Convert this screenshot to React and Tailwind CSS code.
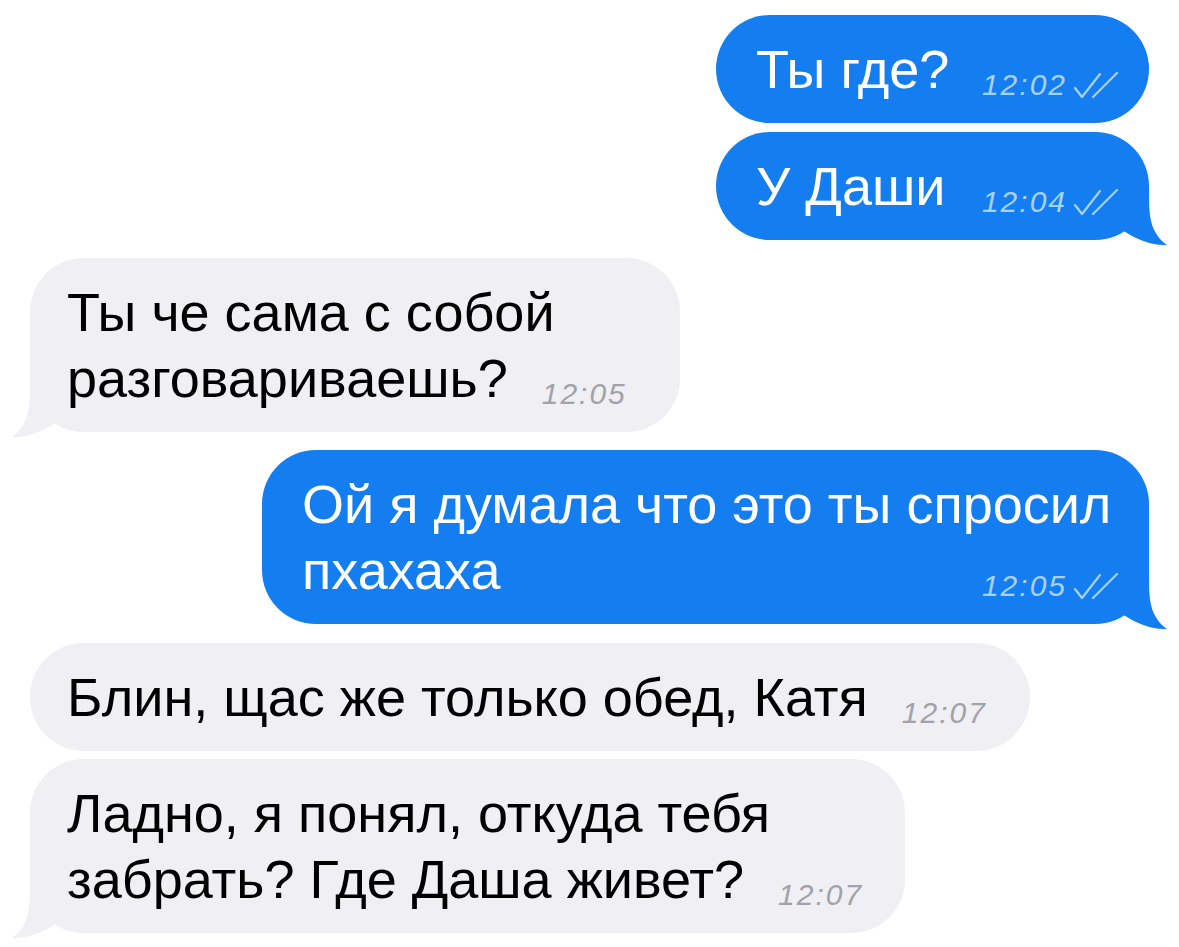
const font = "font-['Liberation_Sans',Arial,sans-serif]";

function Checks() {
  return (
    <svg width="46" height="28" viewBox="0 0 46 28" fill="none" className="inline-block ml-[6px]">
      <path d="M2 16 L9 25 L27 2" stroke="#a9d0fa" strokeWidth="2.2" strokeLinecap="round" strokeLinejoin="round" />
      <path d="M20 25 L44 1" stroke="#a9d0fa" strokeWidth="2.2" strokeLinecap="round" />
    </svg>
  );
}

function Time({ value, out }) {
  return (
    <span
      className={`inline-flex items-end shrink-0 italic text-[30px] tracking-[2px] leading-none translate-y-[7px] ${
        out ? 'text-[#a9d0fa]' : 'text-[#a2a2a8]'
      }`}
    >
      {value}
      {out && <Checks />}
    </span>
  );
}

function Tail({ side, color }) {
  // tail drawn at the bottom corner, sitting over the bubble edge
  return (
    <svg
      width="70"
      height="60"
      viewBox="0 0 70 60"
      className={`absolute bottom-[-6px] ${side === 'right' ? 'right-[-18px]' : 'left-[-18px] -scale-x-100'}`}
    >
      <path
        d="M0 0 L52 0 L52 10 C52 34 55 48 70 59 C56 60 40 54 25 44 L0 30 Z"
        fill={color}
      />
    </svg>
  );
}

function Bubble({ out, tail, width, lines, time, spread }) {
  const color = out ? '#147ef0' : '#efeff4';
  return (
    <div
      className={`relative rounded-[54px] py-[21px] text-[54px] leading-[66px] ${
        out ? 'self-end mr-[30px] bg-[#147ef0] text-white pl-[40px] pr-[30px]' : 'self-start ml-[30px] bg-[#efeff4] text-black pl-[37px] pr-[38px]'
      } ${width}`}
    >
      {tail && <Tail side={out ? 'right' : 'left'} color={color} />}
      <div className="relative">
        {lines.slice(0, -1).map((l) => (
          <div key={l} className="whitespace-nowrap">{l}</div>
        ))}
        <div className={`flex items-baseline whitespace-nowrap ${spread ? 'justify-between' : 'gap-[34px]'}`}>
          <span>{lines[lines.length - 1]}</span>
          <Time value={time} out={out} />
        </div>
      </div>
    </div>
  );
}

export default function App() {
  return (
    <div className={`w-[1179px] h-[947px] bg-white flex flex-col pt-[15px] overflow-hidden ${font}`}>
      <Bubble out width="w-[433px]" lines={['Ты где?']} time="12:02" spread />
      <div className="h-[9px] shrink-0" />
      <Bubble out tail width="w-[433px]" lines={['У Даши']} time="12:04" spread />
      <div className="h-[18px] shrink-0" />
      <Bubble tail width="w-[650px]" lines={['Ты че сама с собой', 'разговариваешь?']} time="12:05" />
      <div className="h-[18px] shrink-0" />
      <Bubble out tail width="w-[887px]" lines={['Ой я думала что это ты спросил', 'пхахаха']} time="12:05" spread />
      <div className="h-[19px] shrink-0" />
      <Bubble width="w-[1000px]" lines={['Блин, щас же только обед, Катя']} time="12:07" />
      <div className="h-[8px] shrink-0" />
      <Bubble tail width="w-[875px]" lines={['Ладно, я понял, откуда тебя', 'забрать? Где Даша живет?']} time="12:07" />
    </div>
  );
}
